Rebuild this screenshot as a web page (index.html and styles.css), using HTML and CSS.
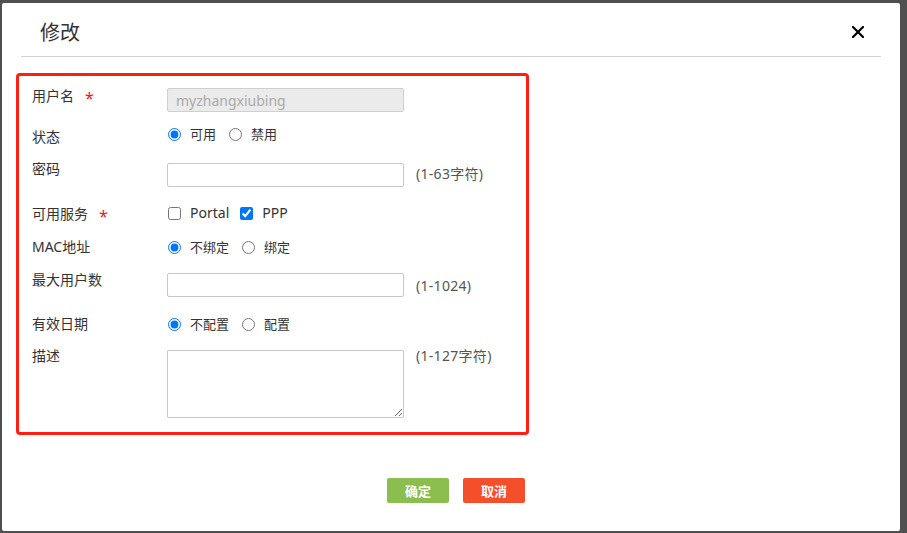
FILE: index.html
```html
<!DOCTYPE html>
<html lang="zh-CN">
<head>
<meta charset="utf-8">
<title>修改</title>
<link rel="stylesheet" href="styles.css">
</head>
<body>
<div class="dialog">
  <div class="dialog-header">
    <span class="dialog-title">修改</span>
    <span class="dialog-close" aria-label="关闭">
      <svg width="12" height="12" viewBox="0 0 12 12"><path d="M1 1 L11 11 M11 1 L1 11" stroke="#000" stroke-width="2.2" stroke-linecap="square" fill="none"/></svg>
    </span>
  </div>
  <form class="form-box">
    <div class="row r1">
      <label class="row-label">用户名<span class="req">*</span></label>
      <input class="text-input disabled" type="text" value="myzhangxiubing" disabled>
    </div>
    <div class="row r2">
      <label class="row-label shift">状态</label>
      <div class="opts">
        <label class="opt"><input type="radio" name="st" checked><span>可用</span></label>
        <label class="opt"><input type="radio" name="st"><span>禁用</span></label>
      </div>
    </div>
    <div class="row r3">
      <label class="row-label">密码</label>
      <input class="text-input mt4" type="password">
      <span class="hint mt5">(1-63字符)</span>
    </div>
    <div class="row r4">
      <label class="row-label">可用服务<span class="req">*</span></label>
      <div class="opts">
        <label class="opt chk"><input type="checkbox"><span>Portal</span></label>
        <label class="opt chk"><input type="checkbox" checked><span>PPP</span></label>
      </div>
    </div>
    <div class="row r5">
      <label class="row-label">MAC地址</label>
      <div class="opts">
        <label class="opt"><input type="radio" name="mac" checked><span>不绑定</span></label>
        <label class="opt"><input type="radio" name="mac"><span>绑定</span></label>
      </div>
    </div>
    <div class="row r6">
      <label class="row-label">最大用户数</label>
      <input class="text-input mt3" type="text">
      <span class="hint mt6">(1-1024)</span>
    </div>
    <div class="row r7">
      <label class="row-label">有效日期</label>
      <div class="opts">
        <label class="opt"><input type="radio" name="exp" checked><span>不配置</span></label>
        <label class="opt"><input type="radio" name="exp"><span>配置</span></label>
      </div>
    </div>
    <div class="row r8">
      <label class="row-label">描述</label>
      <textarea class="text-area"></textarea>
      <span class="hint">(1-127字符)</span>
    </div>
  </form>
  <div class="actions">
    <button class="btn btn-ok" type="button">确定</button>
    <button class="btn btn-cancel" type="button">取消</button>
  </div>
</div>
</body>
</html>
```

FILE: styles.css
```css
html, body {
  margin: 0;
  height: 100%;
}
body {
  background: #505050;
  padding: 3px 7px 2px 2px;
  box-sizing: border-box;
  font-family: "Noto Sans", "Noto Sans CJK SC", sans-serif;
  color: #333;
}
.dialog {
  background: #fff;
  width: 898px;
  height: 528px;
  border-radius: 2px;
  box-sizing: border-box;
  display: flex;
  flex-direction: column;
}
.dialog-header {
  margin: 0 19px;
  height: 53px;
  border-bottom: 1px solid #d2d2d2;
  display: flex;
  align-items: flex-start;
  justify-content: space-between;
  padding: 0 17px 0 19px;
}
.dialog-title {
  font-family: "Noto Sans CJK SC", sans-serif;
  font-size: 20px;
  line-height: 46px;
  padding-top: 6px;
  color: #333;
}
.dialog-close {
  margin-top: 23px;
  width: 12px;
  height: 12px;
  display: block;
}
.dialog-close svg { display: block; }

.form-box {
  margin: 16px 0 0 14px;
  width: 513px;
  box-sizing: border-box;
  border: 3px solid #fd1f14;
  border-radius: 4px;
  padding: 9px 0 14px 13px;
  display: flex;
  flex-direction: column;
}
.row {
  display: flex;
  align-items: flex-start;
}
.r2, .r3, .r8 { margin-top: 12px; }
.r4 { margin-top: 16px; }
.r5, .r6 { margin-top: 13px; }
.r7 { margin-top: 17px; }

.row-label {
  width: 135px;
  flex: none;
  font-size: 14px;
  line-height: 20px;
  color: #333;
  font-family: "Noto Sans", "Noto Sans CJK SC", sans-serif;
}
.row-label.shift { padding-top: 3px; }
.req {
  color: #f0141e;
  font-size: 16px;
  margin-left: 11px;
  position: relative;
  top: 3px;
}
.text-input {
  width: 237px;
  height: 24px;
  box-sizing: border-box;
  border: 1px solid #c8c8c8;
  border-radius: 2px;
  padding: 0 8px;
  font-family: "Noto Sans", sans-serif;
  font-size: 14px;
  color: #333;
  margin: 3px 0 0 0;
  outline: none;
  background: #fff;
}
.text-input.disabled {
  background: #ebebeb;
  color: #aaa;
  border-color: #cfcfcf;
}
.mt3 { margin-top: 3px; }
.mt4 { margin-top: 4px; }
.mt5 { margin-top: 5px; }
.mt6 { margin-top: 6px; }
.hint {
  margin-left: 12px;
  font-size: 14px;
  line-height: 20px;
  letter-spacing: 0.3px;
  color: #555;
  font-family: "Noto Sans", "Noto Sans CJK SC", sans-serif;
}
.text-area {
  width: 237px;
  height: 68px;
  box-sizing: border-box;
  border: 1px solid #c8c8c8;
  border-radius: 1px;
  margin: 4px 0 0 0;
  padding: 4px 6px;
  resize: both;
  font-family: "Noto Sans", sans-serif;
  font-size: 13px;
  outline: none;
}
.opts {
  display: flex;
  align-items: center;
  height: 20px;
  padding-left: 1px;
}
.opt {
  display: inline-flex;
  align-items: center;
  font-size: 13px;
  line-height: 20px;
  color: #333;
  margin-right: 13px;
  font-family: "Noto Sans", "Noto Sans CJK SC", sans-serif;
}
.opt.chk { margin-right: 11px; }
.opt input {
  margin: 0 9px 0 0;
  width: 13px;
  height: 13px;
}
.opt.chk span { font-size: 14px; }

.actions {
  margin-top: 43px;
  display: flex;
  justify-content: center;
  gap: 14px;
  padding-left: 10px;
}
.btn {
  width: 62px;
  height: 25px;
  border: none;
  border-radius: 2px;
  color: #fff;
  font-family: "Noto Sans CJK SC", sans-serif;
  font-size: 13px;
  font-weight: bold;
  padding: 0;
  cursor: pointer;
}
.btn-ok { background: #8bbd4f; }
.btn-cancel { background: #f54e2a; }
```
